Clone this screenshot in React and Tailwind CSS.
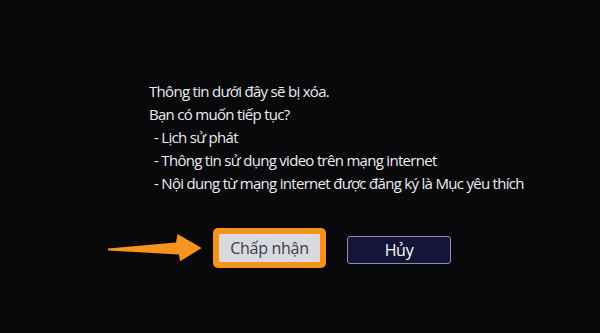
import React from 'react';

const lines = [
  'Thông tin dưới đây sẽ bị xóa.',
  'Bạn có muốn tiếp tục?',
];

const items = [
  'Lịch sử phát',
  'Thông tin sử dụng video trên mạng internet',
  'Nội dung từ mạng internet được đăng ký là Mục yêu thích',
];

const Arrow = () => (
  <svg width="98" height="32" viewBox="104 229 98 32" className="shrink-0">
    <path
      d="M108 245.5 L176 239.5 L177.5 231 L201.7 245 L180 258.3 L179 251.5 L108 247.5 Z"
      fill="#f7941e"
    />
  </svg>
);

const App = () => {
  return (
    <div
      className="w-[600px] h-[333px] overflow-hidden bg-[#09090c] text-[#ececf0] flex flex-col"
      style={{ fontFamily: '"Open Sans", "Noto Sans", sans-serif' }}
    >
      {/* Message */}
      <div className="ml-[149px] mt-[80px] text-[15px] leading-[23px] tracking-[-0.7px]">
        {lines.map((l) => (
          <div key={l}>{l}</div>
        ))}
        {items.map((l) => (
          <div key={l} className="pl-[5px]">
            - {l}
          </div>
        ))}
      </div>

      {/* Buttons */}
      <div className="ml-[104px] mt-[33px] flex items-center">
        <Arrow />
        <div className="ml-[11px] bg-[#f7921c] rounded-[5px] p-[6px]">
          <div className="w-[101px] h-[28px] bg-[#d9dade] rounded-[1px] flex items-center justify-center text-[16px] tracking-[-0.3px] text-[#3b3c4c]">
            Chấp nhận
          </div>
        </div>
        <div className="ml-[21px] mt-[3px] w-[104px] h-[28px] bg-[#15153a] border-[1.5px] border-[#8d8dab] rounded-[3px] flex items-center justify-center text-[16px] tracking-[-0.3px] text-white">
          Hủy
        </div>
      </div>
    </div>
  );
};

export default App;
